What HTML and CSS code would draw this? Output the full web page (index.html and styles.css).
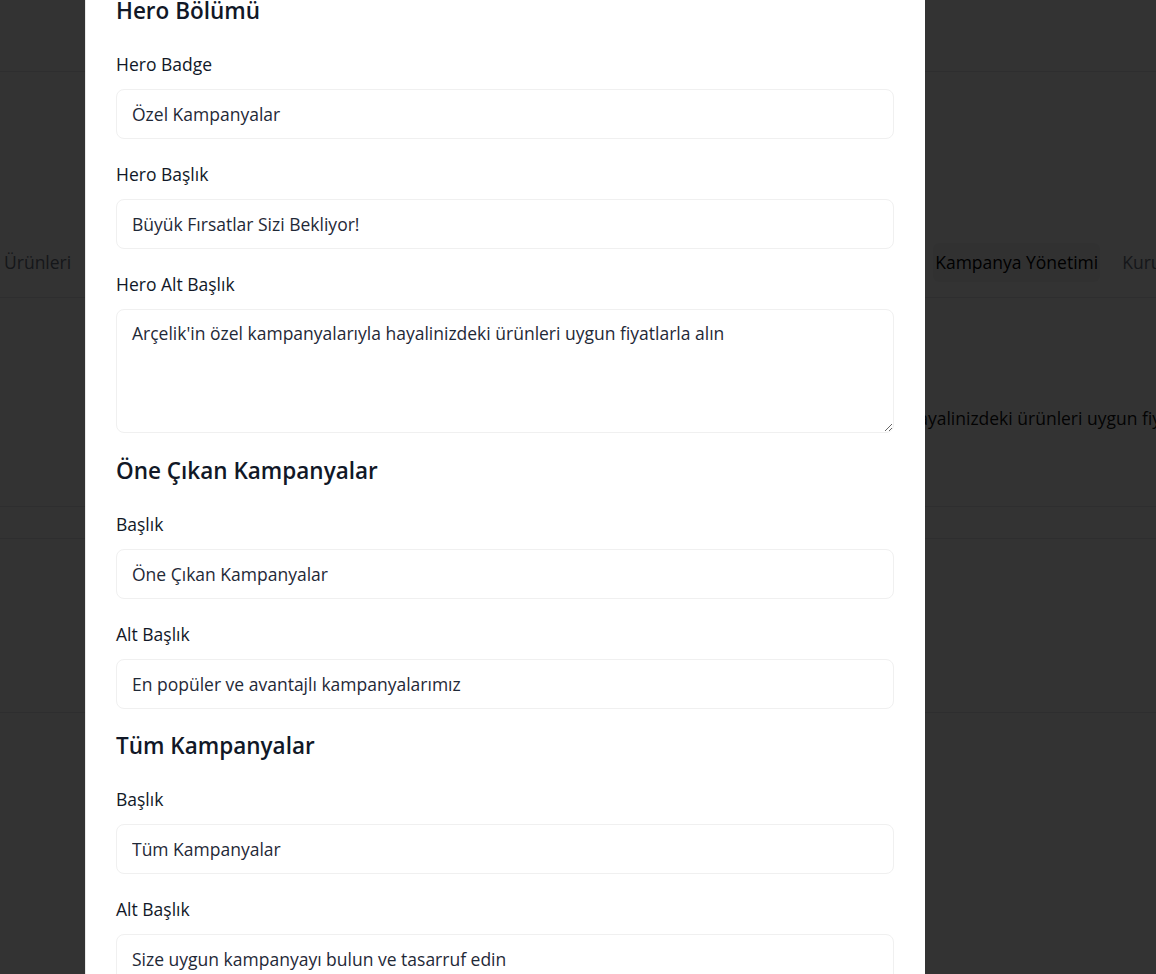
FILE: index.html
```html
<!DOCTYPE html>
<html lang="tr">
<head>
<meta charset="utf-8">
<title>Kampanya Yönetimi</title>
<link rel="stylesheet" href="styles.css">
</head>
<body>
<div class="page">
  <header class="site-header"></header>
  <section class="page-top"></section>
  <nav class="tabs">
    <span class="tab first">Ürünleri</span>
    <span class="tab hidden-tab">Ana Sayfa</span>
    <span class="tab hidden-tab">Kategoriler</span>
    <span class="tab hidden-tab">Ürün Yönetimi</span>
    <span class="tab hidden-tab wide">Siparişler</span>
    <span class="tab active">Kampanya Yönetimi</span>
    <span class="tab">Kurumsal</span>
  </nav>
  <section class="preview">
    <p class="preview-sub">Arçelik'in özel kampanyalarıyla hayalinizdeki ürünleri uygun fiyatlarla alın</p>
  </section>
  <section class="strip"></section>
  <section class="cards"></section>
</div>
<div class="overlay"></div>
<div class="modal">
  <div class="modal-body">
    <section class="form-section">
      <h2 class="section-title">Hero Bölümü</h2>
      <div class="field">
        <label class="field-label">Hero Badge</label>
        <input class="field-input" type="text" value="Özel Kampanyalar">
      </div>
      <div class="field">
        <label class="field-label">Hero Başlık</label>
        <input class="field-input" type="text" value="Büyük Fırsatlar Sizi Bekliyor!">
      </div>
      <div class="field">
        <label class="field-label">Hero Alt Başlık</label>
        <textarea class="field-input field-textarea">Arçelik'in özel kampanyalarıyla hayalinizdeki ürünleri uygun fiyatlarla alın</textarea>
      </div>
    </section>
    <section class="form-section">
      <h2 class="section-title">Öne Çıkan Kampanyalar</h2>
      <div class="field">
        <label class="field-label">Başlık</label>
        <input class="field-input" type="text" value="Öne Çıkan Kampanyalar">
      </div>
      <div class="field">
        <label class="field-label">Alt Başlık</label>
        <input class="field-input" type="text" value="En popüler ve avantajlı kampanyalarımız">
      </div>
    </section>
    <section class="form-section">
      <h2 class="section-title">Tüm Kampanyalar</h2>
      <div class="field">
        <label class="field-label">Başlık</label>
        <input class="field-input" type="text" value="Tüm Kampanyalar">
      </div>
      <div class="field">
        <label class="field-label">Alt Başlık</label>
        <input class="field-input" type="text" value="Size uygun kampanyayı bulun ve tasarruf edin">
      </div>
    </section>
  </div>
</div>
</body>
</html>
```

FILE: styles.css
```css
* { box-sizing: border-box; }

html, body {
  margin: 0;
  padding: 0;
  height: 100%;
  overflow: hidden;
}

body {
  font-family: "Open Sans", "Noto Sans", sans-serif;
  background: #ffffff;
  color: #111827;
}

.page {
  width: 1156px;
}

.site-header {
  height: 72px;
  border-bottom: 1px solid #e5e7eb;
}

.page-top {
  height: 171px;
}

.tabs {
  display: flex;
  align-items: flex-start;
  gap: 22px;
  height: 55px;
  padding-left: 4px;
  border-bottom: 1px solid #e5e7eb;
  white-space: nowrap;
  overflow: hidden;
}

.tab {
  font-size: 17.5px;
  color: #6b7280;
  line-height: 39px;
  height: 39px;
  flex-shrink: 0;
}

.hidden-tab { width: 160px; overflow: hidden; }
.hidden-tab.wide { width: 272px; }

.tab.active {
  color: #000000;
  background: #f3f4f6;
  border-radius: 6px;
  padding: 0 2px;
}

.preview {
  height: 209px;
  border-bottom: 1px solid #e5e7eb;
  padding-left: 654px;
  padding-top: 107px;
}

.preview-sub {
  margin: 0;
  font-size: 17.5px;
  line-height: 26px;
  color: #111111;
  white-space: nowrap;
}

.strip {
  height: 32px;
  border-bottom: 1px solid #e5e7eb;
}

.cards {
  height: 174px;
  border-bottom: 1px solid #e5e7eb;
}

.overlay {
  position: fixed;
  inset: 0;
  background: rgba(0, 0, 0, 0.8);
}

.modal {
  position: fixed;
  top: 0;
  bottom: 0;
  left: 85px;
  width: 840px;
  background: #ffffff;
  border-left: 1px solid #e8e8e8;
  overflow: hidden;
}

.modal-body {
  padding: 0 31px 0 30px;
  margin-top: -2px;
  display: flex;
  flex-direction: column;
  gap: 24.5px;
}

.form-section {
  display: flex;
  flex-direction: column;
  gap: 22px;
}

.section-title {
  margin: 0 0 5px 0;
  font-size: 22.5px;
  font-weight: 600;
  line-height: 26px;
  color: #111827;
}

.field {
  display: flex;
  flex-direction: column;
  gap: 12px;
}

.field-label {
  font-size: 17.5px;
  font-weight: 500;
  line-height: 26px;
  color: #111827;
}

.field-input {
  display: block;
  width: 100%;
  height: 50px;
  padding: 0 15px;
  font-family: "Open Sans", "Noto Sans", sans-serif;
  font-size: 17.5px;
  color: #1f2937;
  background: #ffffff;
  border: 1px solid #f0f0f0;
  border-radius: 8px;
  outline: none;
}

.field-textarea {
  height: 124px;
  padding: 11px 15px;
  line-height: 24px;
  resize: vertical;
}
```
